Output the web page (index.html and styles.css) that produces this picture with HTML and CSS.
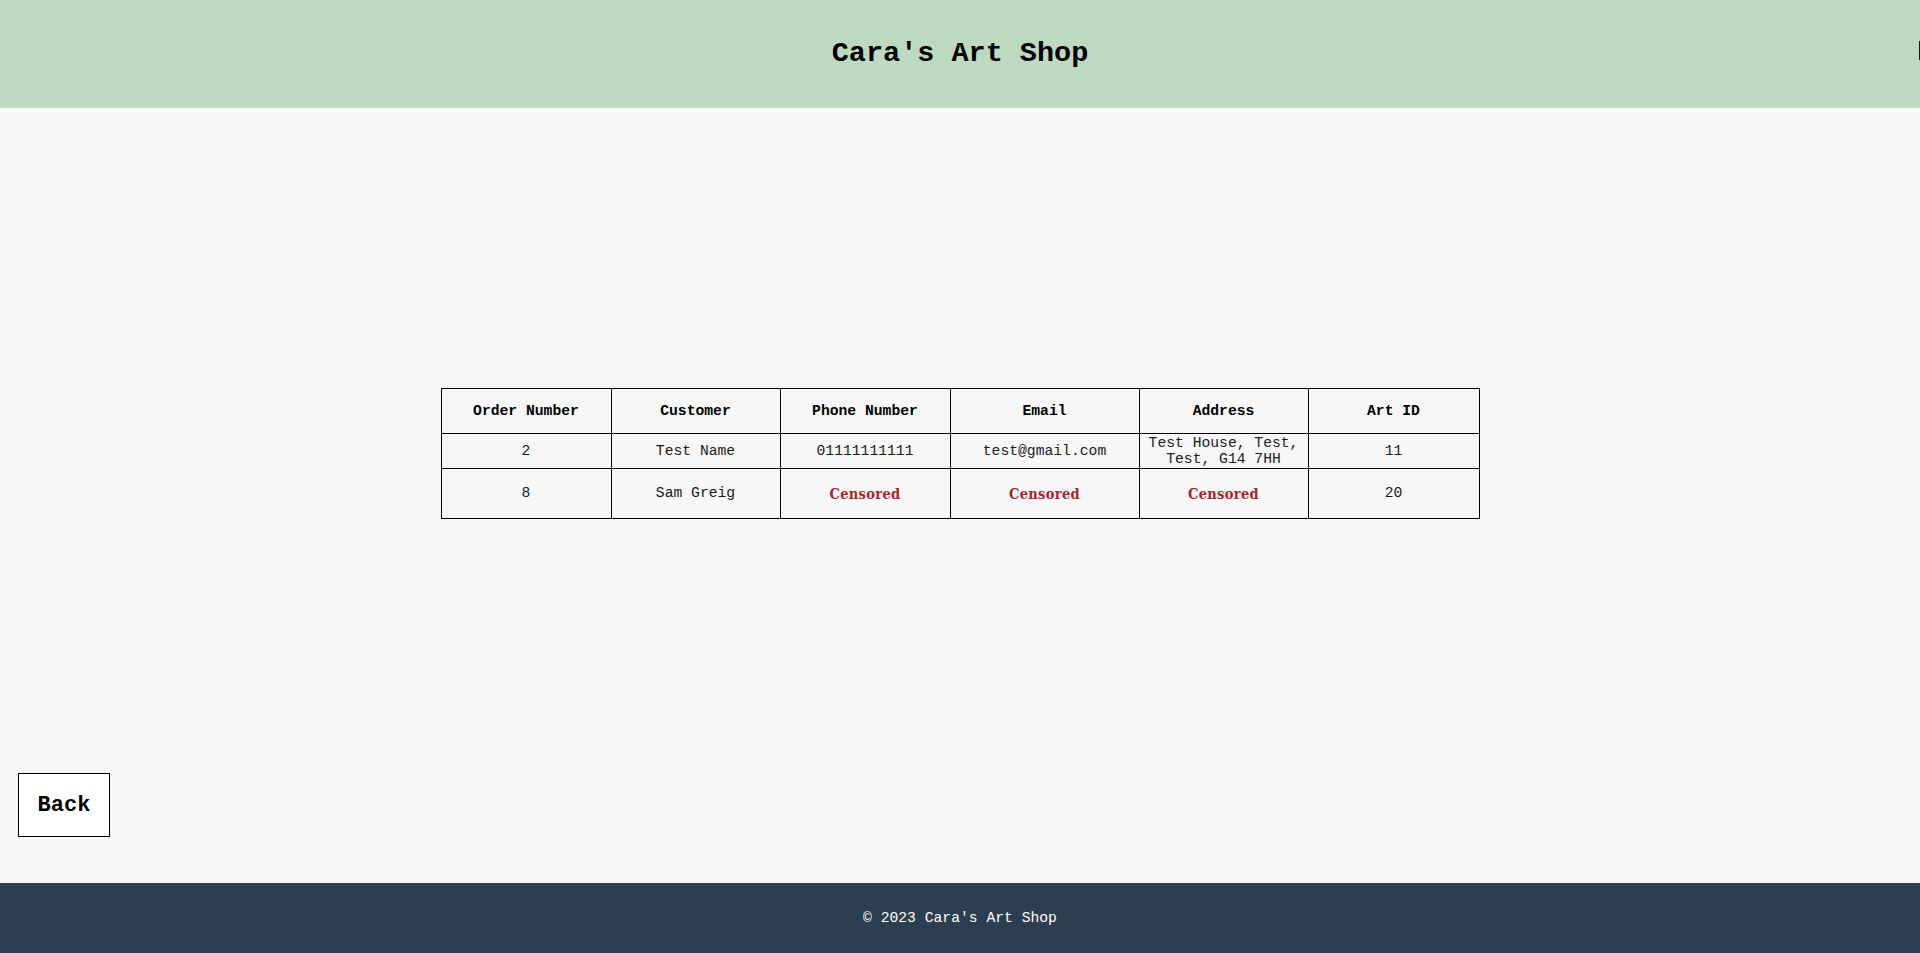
FILE: index.html
```html
<!DOCTYPE html>
<html lang="en">
<head>
<meta charset="utf-8">
<title>Cara's Art Shop</title>
<link rel="stylesheet" href="styles.css">
</head>
<body>
<div class="page">
  <header class="site-header">
    <h1 class="site-title">Cara's Art Shop</h1>
    <span class="nav-edge"></span>
  </header>
  <main class="content">
    <table class="orders">
      <colgroup>
        <col class="c1"><col class="c2"><col class="c3"><col class="c4"><col class="c5"><col class="c6">
      </colgroup>
      <thead>
        <tr>
          <th>Order Number</th>
          <th>Customer</th>
          <th>Phone Number</th>
          <th>Email</th>
          <th>Address</th>
          <th>Art ID</th>
        </tr>
      </thead>
      <tbody>
        <tr class="row-a">
          <td>2</td>
          <td>Test Name</td>
          <td>01111111111</td>
          <td>test@gmail.com</td>
          <td>Test House, Test, Test, G14 7HH</td>
          <td>11</td>
        </tr>
        <tr class="row-b">
          <td>8</td>
          <td>Sam Greig</td>
          <td><span class="censored">Censored</span></td>
          <td><span class="censored">Censored</span></td>
          <td><span class="censored">Censored</span></td>
          <td>20</td>
        </tr>
      </tbody>
    </table>
    <div class="actions">
      <button class="back-btn" type="button">Back</button>
    </div>
  </main>
  <footer class="site-footer">
    <p class="copy">&copy; 2023 Cara's Art Shop</p>
  </footer>
</div>
</body>
</html>
```

FILE: styles.css
```css
* { box-sizing: border-box; }

html, body {
  margin: 0;
  padding: 0;
  height: 100%;
  overflow: hidden;
}

body {
  background: #f7f7f7;
  font-family: "Liberation Mono", "Courier New", monospace;
  color: #000;
}

.page {
  display: flex;
  flex-direction: column;
  min-height: 953px;
}

.site-header {
  position: relative;
  height: 108px;
  background: #bddac0;
  display: flex;
  align-items: center;
  justify-content: center;
}

.site-title {
  margin: 0;
  font-size: 28.5px;
  font-weight: bold;
  line-height: 32px;
}

.nav-edge {
  position: absolute;
  left: 1919px;
  top: 41px;
  width: 40px;
  height: 19px;
  border-left: 2px solid #0d1a10;
}

.content {
  flex: 1;
  display: flex;
  flex-direction: column;
  align-items: center;
  padding-top: 280px;
}

.orders {
  width: 1038px;
  table-layout: fixed;
  border-collapse: collapse;
  font-size: 14.7px;
}

.c1 { width: 170px; }
.c2 { width: 169px; }
.c3 { width: 170px; }
.c4 { width: 189px; }
.c5 { width: 169px; }
.c6 { width: 171px; }

.orders th,
.orders td {
  border: 1px solid #000;
  text-align: center;
  vertical-align: middle;
  padding: 0 4px;
  line-height: 16.5px;
}

.orders th {
  font-weight: bold;
  height: 45px;
}

.orders td { color: #1a1a1a; }

.row-a td { height: 35px; }
.row-b td { height: 50px; }

.censored {
  display: inline-block;
  font-family: "DejaVu Serif Condensed", "DejaVu Serif", "Liberation Serif", serif;
  font-stretch: condensed;
  font-weight: bold;
  font-size: 14.5px;
  color: #a5252d;
  letter-spacing: 0.3px;
  padding-top: 3px;
}

.actions {
  margin-top: auto;
  align-self: stretch;
  padding: 0 0 46px 18px;
}

.back-btn {
  display: block;
  width: 92px;
  height: 64px;
  background: #fff;
  border: 1px solid #000;
  border-radius: 0;
  font-family: "Liberation Mono", "Courier New", monospace;
  font-weight: bold;
  font-size: 22px;
  color: #000;
  padding: 0;
  cursor: pointer;
}

.site-footer {
  height: 70px;
  background: #2c3e50;
  display: flex;
  align-items: center;
  justify-content: center;
}

.copy {
  margin: 0;
  color: #fff;
  font-size: 14.7px;
}
```
